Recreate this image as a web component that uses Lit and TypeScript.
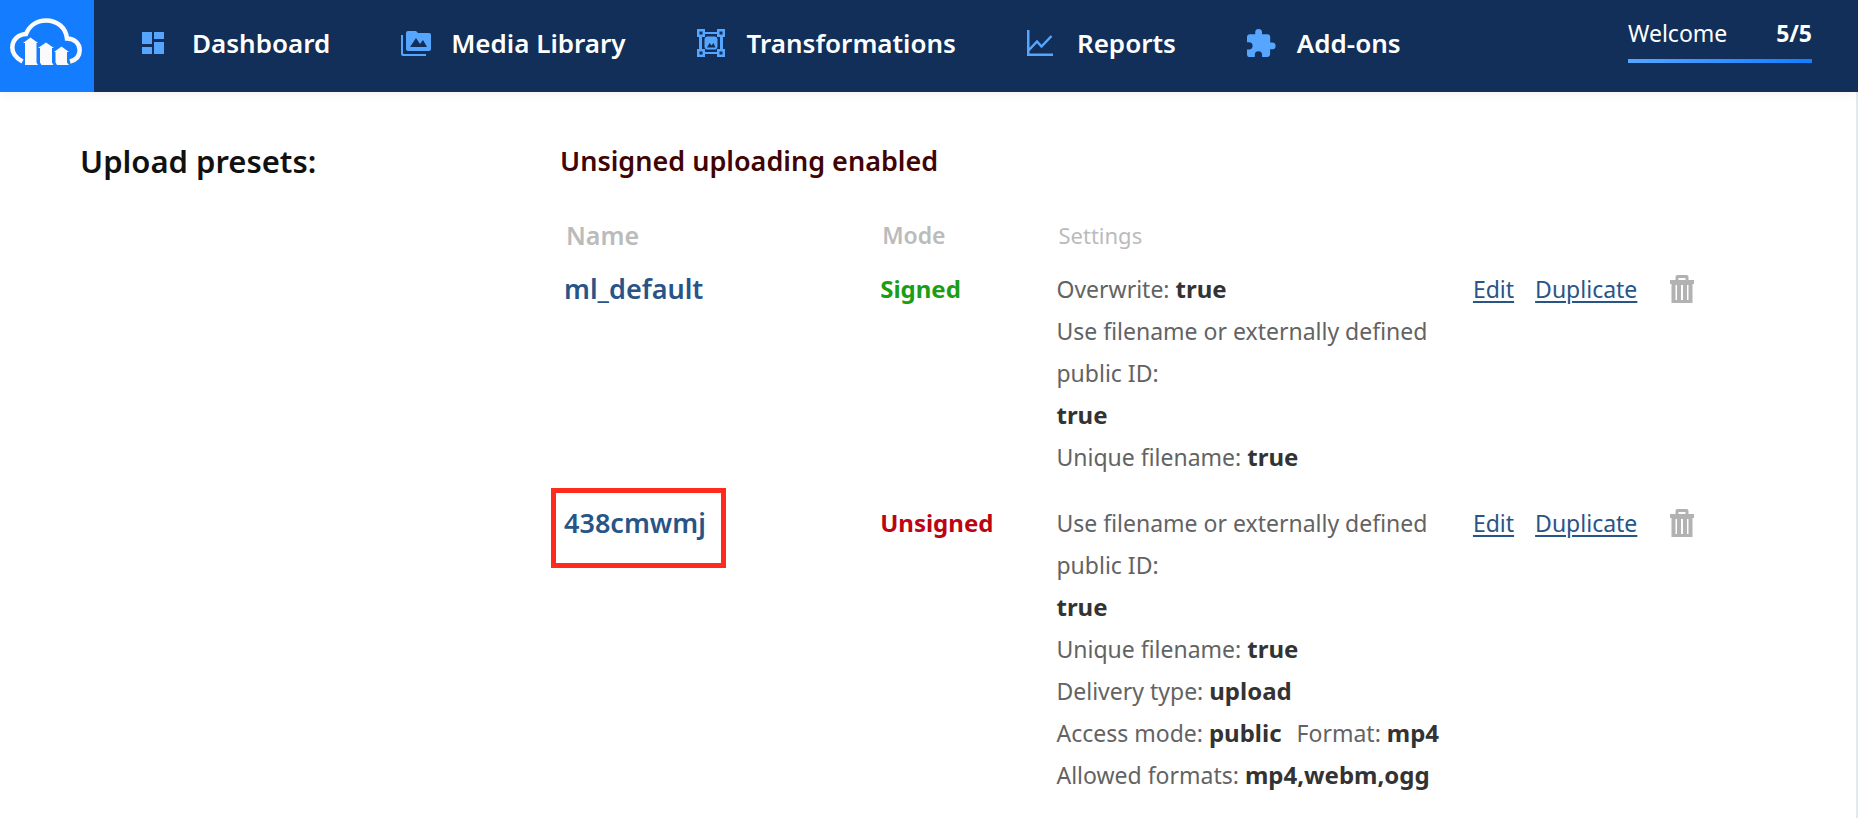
import { LitElement, html, css, svg } from "lit";
import { customElement } from "lit/decorators.js";

interface Setting {
  label: string;
  value: string;
  stacked?: boolean;
}

interface Preset {
  name: string;
  signed: boolean;
  highlighted?: boolean;
  lines: Setting[][];
}

const filenameSetting: Setting = {
  label: "Use filename or externally defined public ID:",
  value: "true",
  stacked: true,
};

const presets: Preset[] = [
  {
    name: "ml_default",
    signed: true,
    lines: [
      [{ label: "Overwrite:", value: "true" }],
      [filenameSetting],
      [{ label: "Unique filename:", value: "true" }],
    ],
  },
  {
    name: "438cmwmj",
    signed: false,
    highlighted: true,
    lines: [
      [filenameSetting],
      [{ label: "Unique filename:", value: "true" }],
      [{ label: "Delivery type:", value: "upload" }],
      [
        { label: "Access mode:", value: "public" },
        { label: "Format:", value: "mp4" },
      ],
      [{ label: "Allowed formats:", value: "mp4,webm,ogg" }],
    ],
  },
];

const dashboardIcon = svg`
  <path d="M0 3h10v12H0zM12 3h10v7H12zM0 18h10v7H0zM12 13h10v12H12z"/>`;

const mediaIcon = svg`
  <path d="M0 6h2v18q0 1 1 1h22v2H2q-2 0-2-2z"/>
  <path fill-rule="evenodd" d="M7 2h8l2 2h11q2 0 2 2v14q0 2-2 2H7q-2 0-2-2V4q0-2 2-2zM9 18h17l-4-7-3 4-4-6z"/>`;

const transformIcon = svg`
  <path fill-rule="evenodd" d="M0 0h8v3h12V0h8v8h-2v12h2v8h-8v-3H8v3H0v-8h2V8H0zM2.500 2.500v3h3v-3zM22.500 2.500v3h3v-3zM2.500 22.500v3h3v-3zM22.500 22.500v3h3v-3zM8 5v3H5v12h3v3h12v-3h3V8h-3V5z"/>
  <path fill-rule="evenodd" d="M10 7.500h8q2 0 2.500 2.500v8q-.5 2.500-2.500 2.500h-8q-2 0-2.500-2.500v-8q.5-2.500 2.500-2.500zM10 18.500h8.500l-2-4.500-2 2.500-2-2.500z"/>`;

const reportsIcon = svg`
  <path d="M1.250 0v24.750H26M1.500 20.500L10 11.500l4.500 5L24.500 6" fill="none" stroke="currentColor" stroke-width="2.500"/>`;

const addonsIcon = svg`
  <path d="M25.200 13.500h-2V8c0-1.600-1.200-2.700-2.700-2.700H15V3.500a3.400 3.400 0 0 0-6.800 0v1.800H2.800C1.200 5.300 0 6.500 0 8v5.200h2a3.600 3.600 0 0 1 0 7.200H0v5C0 27 1.200 28 2.700 28h5.100v-2a3.600 3.600 0 0 1 7.300 0v2h5.200c1.600 0 2.800-1.100 2.800-2.700v-5h2.100a3.400 3.400 0 0 0 0-6.800z"/>`;

const navItems = [
  { label: "Dashboard", icon: dashboardIcon, height: 28 },
  { label: "Media Library", icon: mediaIcon, height: 28 },
  { label: "Transformations", icon: transformIcon, height: 28 },
  { label: "Reports", icon: reportsIcon, height: 26 },
  { label: "Add-ons", icon: addonsIcon, height: 28 },
];

@customElement("app-header")
class AppHeader extends LitElement {
  static styles = css`
    :host {
      display: flex;
      position: relative;
      background: #112f58;
      color: #fff;
      box-shadow: 0 0 12px rgba(0, 0, 0, 0.08);
    }
    .logo {
      display: flex;
      align-items: center;
      justify-content: center;
      box-sizing: border-box;
      flex: none;
      width: 94px;
      height: 92px;
      padding: 0 2px 8px 0;
      background: #147dff;
    }
    .nav {
      display: flex;
      align-items: center;
      flex: 1;
      gap: 71px;
      padding: 0 48px 6px;
    }
    .item {
      display: flex;
      align-items: center;
      gap: 20px;
      color: #fff;
      font-size: 26px;
      line-height: 36px;
      font-weight: 600;
      text-decoration: none;
      white-space: nowrap;
    }
    .icon {
      flex: none;
      width: 30px;
      color: #56a6ff;
      fill: currentColor;
    }
    .user {
      flex: none;
      width: 184px;
      margin-right: 46px;
      padding-top: 17px;
      font-size: 23px;
      line-height: 32px;
    }
    .line {
      display: flex;
      justify-content: space-between;
      padding-bottom: 10px;
    }
    .bar {
      height: 4px;
      background: linear-gradient(90deg, #56a6ff, #147dff);
    }
  `;

  render() {
    return html`
      <a class="logo" href="#" aria-label="Home">
        <svg width="72" height="48" viewBox="0 0 72 48" fill="#fafafa">
          <path
            d="M12.500 43.500C5 39.500 2.300 35 2.300 29.500C2.300 22 8 16.500 16 16C19.500 7.500 27 2.500 36 2.500C47.500 2.500 56 10 57 20.500C64.500 20.500 69.700 25.500 69.700 32C69.700 38 66 42 60 43.500"
            fill="none" stroke="#fafafa" stroke-width="4.500"/>
          <path d="M13 25L20.500 19.500 28 25h-1.500v19.500l1.500 2.500H15V25z"/>
          <path d="M28 30l8-5.500L44 30h-2v14.500l1.500 2.500h-12l-1.500-2.500V30z"/>
          <path d="M44 34l7.500-5.500L59 34h-2v10.500l2 2.500H47l-1.500-2.500V34z"/>
        </svg>
      </a>
      <nav class="nav">
        ${navItems.map(
          (item) => html`
            <a class="item" href="#">
              <svg class="icon" height=${item.height} viewBox="0 0 30 ${item.height}" aria-hidden="true">
                ${item.icon}
              </svg>
              <span>${item.label}</span>
            </a>
          `
        )}
      </nav>
      <div class="user">
        <div class="line"><span>Welcome</span><strong>5/5</strong></div>
        <div class="bar"></div>
      </div>
    `;
  }
}

@customElement("app-root")
class AppRoot extends LitElement {
  static styles = css`
    :host {
      display: flex;
      flex-direction: column;
      min-height: 100vh;
      background: #fff;
      color: #636363;
      font-family: "Noto Sans", sans-serif;
      font-size: 23px;
      line-height: 42px;
    }
    .page {
      display: grid;
      grid-template-columns: 480px 1fr;
      flex: 1;
      padding: 48px 80px 0;
      border-right: 2px solid #e3eaee;
    }
    .title {
      margin: 0;
      color: #111;
      font-size: 31px;
      line-height: 42px;
      font-weight: 600;
    }
    .status {
      margin: 0 0 32px;
      color: #400404;
      font-size: 27px;
      line-height: 42px;
      font-weight: 600;
    }
    .presets {
      width: 100%;
      table-layout: fixed;
      border-collapse: collapse;
    }
    .name-col {
      width: 26%;
    }
    .mode-col {
      width: 14.5%;
    }
    .settings-col {
      width: 34.25%;
    }
    th {
      padding: 0 6px 12px;
      color: #bbb;
      font-weight: 600;
      text-align: left;
    }
    .name-head {
      font-size: 25px;
    }
    .settings-head {
      font-weight: 400;
      font-size: 22px;
    }
    td {
      padding: 0 4px 24px;
      vertical-align: top;
    }
    .name {
      position: relative;
      color: #285488;
      font-size: 27px;
      font-weight: 600;
      text-decoration: none;
    }
    .highlighted::after {
      content: "";
      position: absolute;
      inset: -16px -20px -27px -13px;
      border: 5px solid #ff2b1d;
    }
    .signed,
    .unsigned {
      font-size: 24px;
      font-weight: 700;
    }
    .signed {
      color: #1b9e14;
    }
    .unsigned {
      color: #bb0510;
    }
    .setting + .setting {
      margin-left: 15px;
    }
    .value {
      color: #333;
      font-size: 24px;
      line-height: 1;
      font-weight: 700;
    }
    .stacked {
      display: block;
      line-height: 42px;
    }
    .actions {
      display: flex;
      align-items: center;
      gap: 21px;
    }
    .action {
      color: #285488;
      text-decoration: underline;
      text-decoration-thickness: 2px;
      text-underline-offset: 3px;
    }
    .remove {
      display: flex;
      margin: 0 0 0 12px;
      padding: 0;
      border: 0;
      background: none;
      color: #b2b2b2;
      cursor: pointer;
    }
  `;

  private renderSetting(setting: Setting) {
    return html`<span class="setting"
      >${setting.label}
      <strong class="value ${setting.stacked ? "stacked" : ""}">${setting.value}</strong></span
    >`;
  }

  private renderPreset(preset: Preset) {
    return html`
      <tr>
        <td><a class="name ${preset.highlighted ? "highlighted" : ""}" href="#">${preset.name}</a></td>
        <td class=${preset.signed ? "signed" : "unsigned"}>${preset.signed ? "Signed" : "Unsigned"}</td>
        <td>
          ${preset.lines.map((line) => html`<div>${line.map((s) => this.renderSetting(s))}</div>`)}
        </td>
        <td>
          <div class="actions">
            <a class="action" href="#">Edit</a>
            <a class="action" href="#">Duplicate</a>
            <button class="remove" type="button" aria-label="Delete ${preset.name}">
              <svg width="24" height="28" viewBox="0 0 24 28" fill="currentColor">
                <path
                  fill-rule="evenodd"
                  d="M0 5h5.500V2q0-2 2-2h9q2 0 2 2v3H24v4h-1.500v19h-21V9H0zM8.500 3v2h7V3zM5.500 10v15H7V10zM11 10v15h2V10zM17 10v15h1.500V10z"
                />
              </svg>
            </button>
          </div>
        </td>
      </tr>
    `;
  }

  render() {
    return html`
      <app-header></app-header>
      <main class="page">
        <h1 class="title">Upload presets:</h1>
        <section>
          <h2 class="status">Unsigned uploading enabled</h2>
          <table class="presets">
            <colgroup>
              <col class="name-col" />
              <col class="mode-col" />
              <col class="settings-col" />
              <col />
            </colgroup>
            <thead>
              <tr>
                <th class="name-head" scope="col">Name</th>
                <th scope="col">Mode</th>
                <th class="settings-head" scope="col">Settings</th>
                <th></th>
              </tr>
            </thead>
            <tbody>
              ${presets.map((preset) => this.renderPreset(preset))}
            </tbody>
          </table>
        </section>
      </main>
    `;
  }
}
